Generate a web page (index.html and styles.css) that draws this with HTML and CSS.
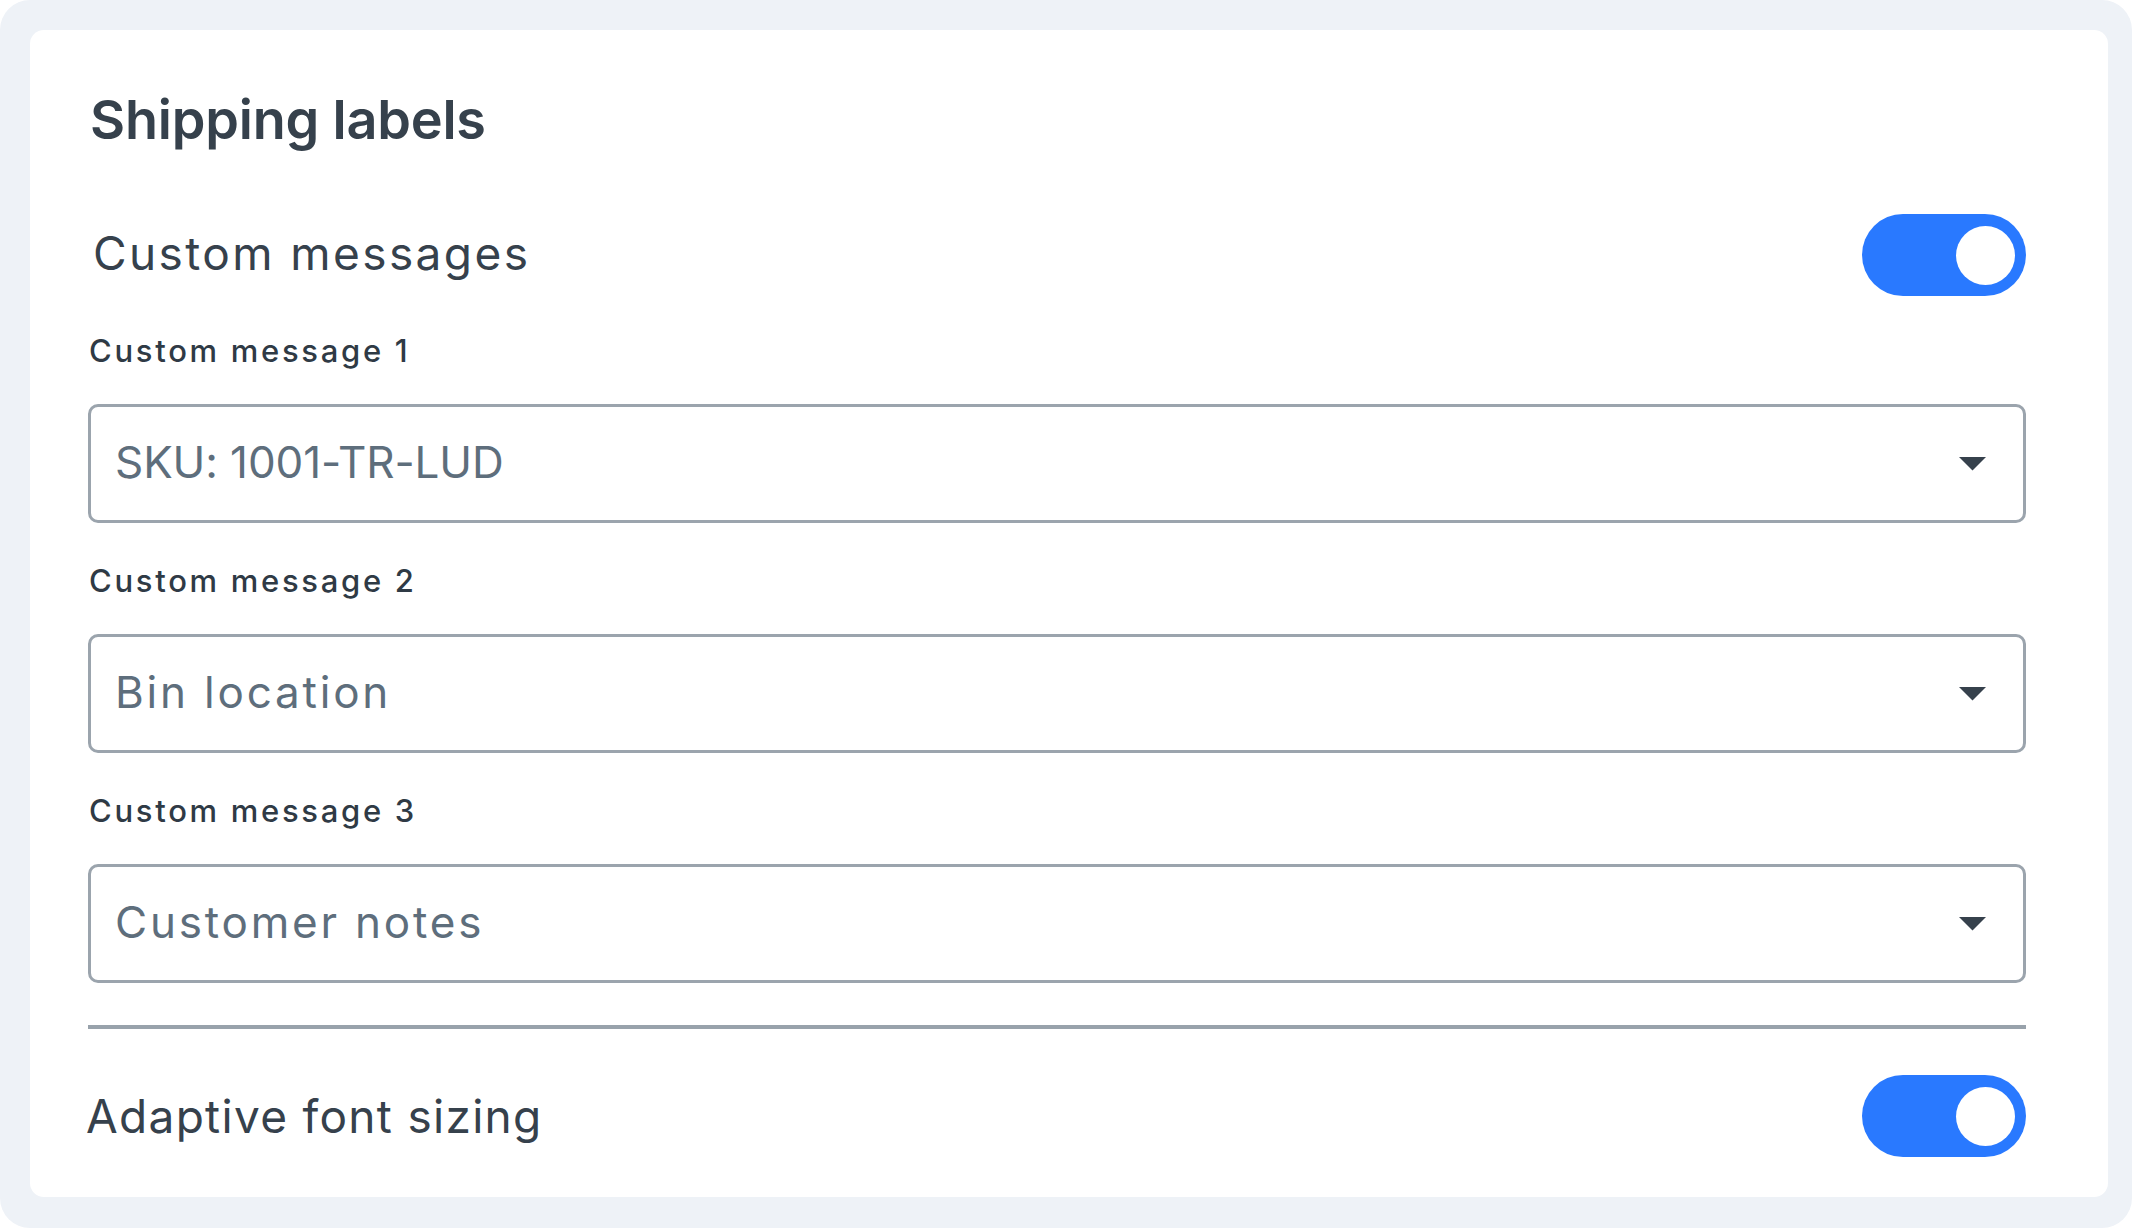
FILE: index.html
```html
<!DOCTYPE html>
<html lang="en">
<head>
<meta charset="utf-8">
<title>Shipping labels</title>
<link rel="stylesheet" href="styles.css">
</head>
<body>
<div class="frame">
  <section class="card">
    <h1 class="title">Shipping labels</h1>

    <div class="setting-row">
      <h2 class="setting-name">Custom messages</h2>
      <div class="toggle is-on" role="switch" aria-checked="true"><span class="knob"></span></div>
    </div>

    <div class="field field--first">
      <label class="field-label">Custom message 1</label>
      <div class="select" role="combobox">
        <span class="select-value select-value--code">SKU: 1001-TR-LUD</span>
        <svg class="caret" width="27" height="14" viewBox="0 0 27 14"><polygon points="0,0 27,0 13.5,13.5" fill="#36414c"/></svg>
      </div>
    </div>

    <div class="field">
      <label class="field-label">Custom message 2</label>
      <div class="select" role="combobox">
        <span class="select-value">Bin location</span>
        <svg class="caret" width="27" height="14" viewBox="0 0 27 14"><polygon points="0,0 27,0 13.5,13.5" fill="#36414c"/></svg>
      </div>
    </div>

    <div class="field">
      <label class="field-label">Custom message 3</label>
      <div class="select" role="combobox">
        <span class="select-value">Customer notes</span>
        <svg class="caret" width="27" height="14" viewBox="0 0 27 14"><polygon points="0,0 27,0 13.5,13.5" fill="#36414c"/></svg>
      </div>
    </div>

    <hr class="divider">

    <div class="setting-row setting-row--last">
      <h2 class="setting-name setting-name--tight">Adaptive font sizing</h2>
      <div class="toggle is-on" role="switch" aria-checked="true"><span class="knob"></span></div>
    </div>
  </section>
</div>
</body>
</html>
```

FILE: styles.css
```css
* { box-sizing: border-box; }

html, body {
  margin: 0;
  padding: 0;
  background: #ffffff;
}

body {
  font-family: Inter, "Noto Sans", "Liberation Sans", sans-serif;
  color: #36414c;
}

.frame {
  width: 2132px;
  height: 1228px;
  background: #eef2f7;
  border-radius: 30px;
  padding: 30px 24px 31px 30px;
}

.card {
  height: 100%;
  background: #ffffff;
  border-radius: 14px;
  padding: 63px 82px 0 58px;
  display: flex;
  flex-direction: column;
}

.title {
  margin: 0 0 67px 2px;
  font-size: 54px;
  line-height: 54px;
  font-weight: 600;
  color: #36414c;
  letter-spacing: -0.2px;
}

.setting-row {
  display: flex;
  align-items: center;
  justify-content: space-between;
  height: 82px;
}

.setting-name {
  margin: -4px 0 0 5px;
  font-size: 46px;
  line-height: 50px;
  font-weight: 400;
  color: #36414c;
  letter-spacing: 2.4px;
}

.setting-name--tight {
  margin: 0 0 0 -2px;
  letter-spacing: 1.3px;
}

.toggle {
  width: 164px;
  height: 82px;
  border-radius: 41px;
  background: #2979ff;
  display: flex;
  align-items: center;
  justify-content: flex-end;
  padding-right: 11px;
  flex: none;
}

.knob {
  width: 59px;
  height: 59px;
  border-radius: 50%;
  background: #ffffff;
}

.field {
  display: flex;
  flex-direction: column;
}

.field--first {
  margin-top: 35px;
}

.field + .field {
  margin-top: 38px;
}

.field-label {
  font-size: 31px;
  line-height: 40px;
  font-weight: 500;
  color: #2f3a45;
  margin: 0 0 33px 1px;
  letter-spacing: 2.7px;
}

.select {
  height: 119px;
  border: 3px solid #9ba4ad;
  border-radius: 10px;
  display: flex;
  align-items: center;
  justify-content: space-between;
  padding: 0 37px 0 24px;
}

.select-value {
  font-size: 44px;
  line-height: 50px;
  font-weight: 400;
  color: #5e6e7c;
  letter-spacing: 2.8px;
  margin-top: -3px;
}

.select-value--code {
  letter-spacing: -0.1px;
}

.caret {
  display: block;
  flex: none;
}

.divider {
  margin: 42px 0 0 0;
  height: 4px;
  border: 0;
  background: #98a2ab;
}

.setting-row--last {
  margin-top: 46px;
}
```
